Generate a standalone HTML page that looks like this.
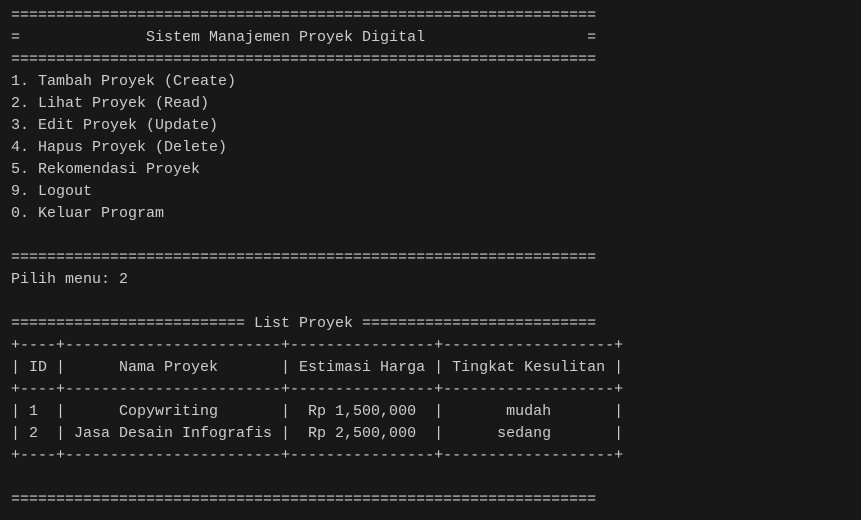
<!DOCTYPE html>
<html><head><meta charset="utf-8"><style>
html,body{margin:0;padding:0;background:#181818;width:861px;height:520px;overflow:hidden}
pre{margin:0;position:absolute;left:11px;top:5px;font-family:"Liberation Mono",monospace;font-size:15px;line-height:22px;color:#cccccc}
</style></head><body><pre>=================================================================
=              Sistem Manajemen Proyek Digital                  =
=================================================================
1. Tambah Proyek (Create)
2. Lihat Proyek (Read)
3. Edit Proyek (Update)
4. Hapus Proyek (Delete)
5. Rekomendasi Proyek
9. Logout
0. Keluar Program

=================================================================
Pilih menu: 2

========================== List Proyek ==========================
+----+------------------------+----------------+-------------------+
| ID |      Nama Proyek       | Estimasi Harga | Tingkat Kesulitan |
+----+------------------------+----------------+-------------------+
| 1  |      Copywriting       |  Rp 1,500,000  |       mudah       |
| 2  | Jasa Desain Infografis |  Rp 2,500,000  |      sedang       |
+----+------------------------+----------------+-------------------+

=================================================================
</pre></body></html>
